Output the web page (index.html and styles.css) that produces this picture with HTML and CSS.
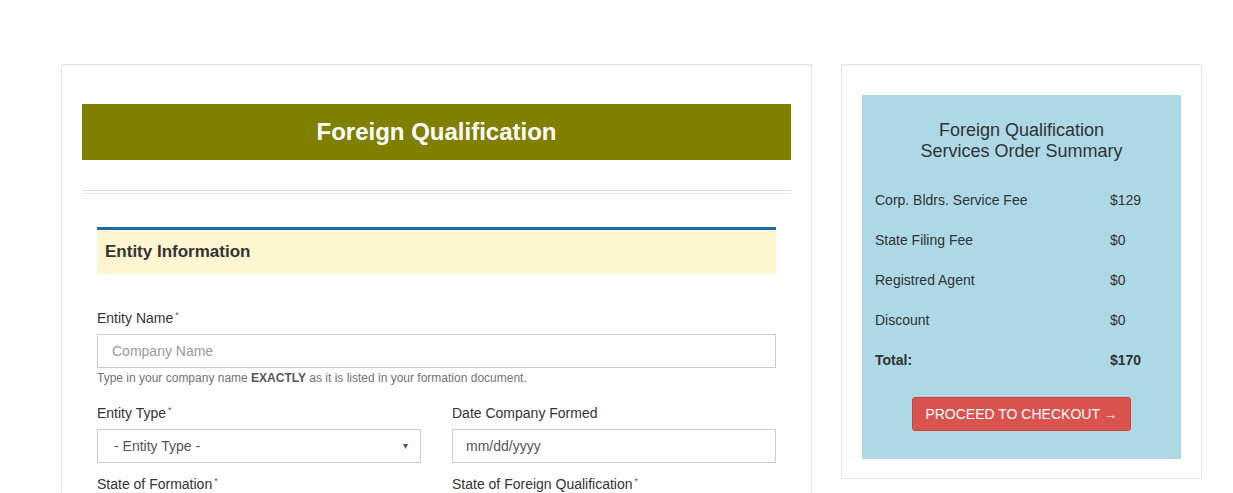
FILE: index.html
```html
<!DOCTYPE html>
<html lang="en">
<head>
<meta charset="utf-8">
<title>Foreign Qualification</title>
<link rel="stylesheet" href="styles.css">
</head>
<body>
<div class="page">
  <section class="card main-card">
    <h1 class="banner">Foreign Qualification</h1>
    <hr class="divider">
    <form class="form">
      <div class="section-head">Entity Information</div>

      <div class="field field-first">
        <label class="label">Entity Name<sup class="req">*</sup></label>
        <div class="input placeholder">Company Name</div>
        <p class="help">Type in your company name <b>EXACTLY</b> as it is listed in your formation document.</p>
      </div>

      <div class="grid2">
        <div class="field">
          <label class="label">Entity Type<sup class="req">*</sup></label>
          <div class="input select"><span>- Entity Type -</span><span class="caret">&#9662;</span></div>
        </div>
        <div class="field">
          <label class="label">Date Company Formed</label>
          <div class="input value">mm/dd/yyyy</div>
        </div>
        <div class="field">
          <label class="label">State of Formation<sup class="req">*</sup></label>
        </div>
        <div class="field">
          <label class="label">State of Foreign Qualification<sup class="req">*</sup></label>
        </div>
      </div>
    </form>
  </section>

  <aside class="card side-card">
    <div class="summary">
      <h2 class="summary-title">Foreign Qualification<br>Services Order Summary</h2>
      <div class="rows">
        <div class="row"><span>Corp. Bldrs. Service Fee</span><span>$129</span></div>
        <div class="row"><span>State Filing Fee</span><span>$0</span></div>
        <div class="row"><span>Registred Agent</span><span>$0</span></div>
        <div class="row"><span>Discount</span><span>$0</span></div>
        <div class="row total"><span>Total:</span><span>$170</span></div>
      </div>
      <div class="btn-wrap"><button class="btn" type="button">PROCEED TO CHECKOUT &rarr;</button></div>
    </div>
  </aside>
</div>
</body>
</html>
```

FILE: styles.css
```css
* { box-sizing: border-box; }
html, body { margin: 0; padding: 0; background: #fff; }
body {
  font-family: "Liberation Sans", Arial, sans-serif;
  color: #333;
  font-size: 14px;
  overflow: hidden;
}
.page {
  display: flex;
  align-items: flex-start;
  gap: 29px;
  padding: 64px 0 0 61px;
}
.card {
  background: #fff;
  border: 1px solid #e3e3e8;
  border-radius: 2px;
}
.main-card {
  width: 751px;
  height: 429px;
  padding: 39px 20px 0 20px;
  border-bottom: none;
  overflow: hidden;
}
.banner {
  margin: 0;
  height: 56px;
  line-height: 56px;
  background: #808000;
  color: #fff;
  font-size: 24px;
  font-weight: bold;
  text-align: center;
}
.divider {
  margin: 30px 0 0;
  height: 4px;
  border: 0;
  border-top: 1px solid #dedede;
  border-bottom: 1px solid #ececec;
}
.form {
  padding: 33px 15px 0;
}
.section-head {
  height: 47px;
  border-top: 3px solid #1b6ea3;
  background: #fdf6d0;
  font-size: 17px;
  font-weight: bold;
  color: #333;
  padding: 12px 0 0 8px;
}
.field-first { margin-top: 34px; }
.label {
  display: block;
  font-size: 14px;
  line-height: 20px;
  color: #333;
  margin-bottom: 6px;
}
.req {
  font-size: 9px;
  vertical-align: top;
  position: relative;
  top: -3px;
  margin-left: 2px;
  color: #555;
}
.input {
  height: 34px;
  border: 1px solid #ccc;
  background: #fff;
  font-size: 14px;
  line-height: 32px;
  padding: 0 14px;
}
.placeholder { color: #999; }
.value { color: #555; padding-left: 13px; }
.select {
  display: flex;
  justify-content: space-between;
  color: #555;
  padding: 0 12px 0 16px;
}
.caret { font-size: 10px; color: #555; }
.help {
  margin: 2px 0 0;
  font-size: 12px;
  line-height: 16px;
  color: #737373;
}
.help b { color: #555; }
.grid2 {
  display: grid;
  grid-template-columns: 324px 324px;
  column-gap: 31px;
  row-gap: 11px;
  margin-top: 17px;
}
.side-card {
  width: 361px;
  padding: 30px 20px 19px;
}
.summary {
  background: #add8e6;
  padding: 25px 13px 28px;
}
.summary-title {
  margin: 0;
  font-size: 18px;
  font-weight: normal;
  line-height: 21px;
  text-align: center;
  color: #333;
}
.rows { margin-top: 18px; }
.row {
  display: grid;
  grid-template-columns: 235px auto;
  height: 40px;
  line-height: 40px;
  font-size: 14px;
  color: #333;
}
.row.total { font-weight: bold; }
.btn-wrap {
  display: flex;
  justify-content: center;
  margin-top: 17px;
}
.btn {
  width: 219px;
  height: 34px;
  background: #d9534f;
  border: 1px solid #d43f3a;
  border-radius: 3px;
  color: #fff;
  font-family: "Liberation Sans", Arial, sans-serif;
  font-size: 14px;
  padding: 0;
}
```
